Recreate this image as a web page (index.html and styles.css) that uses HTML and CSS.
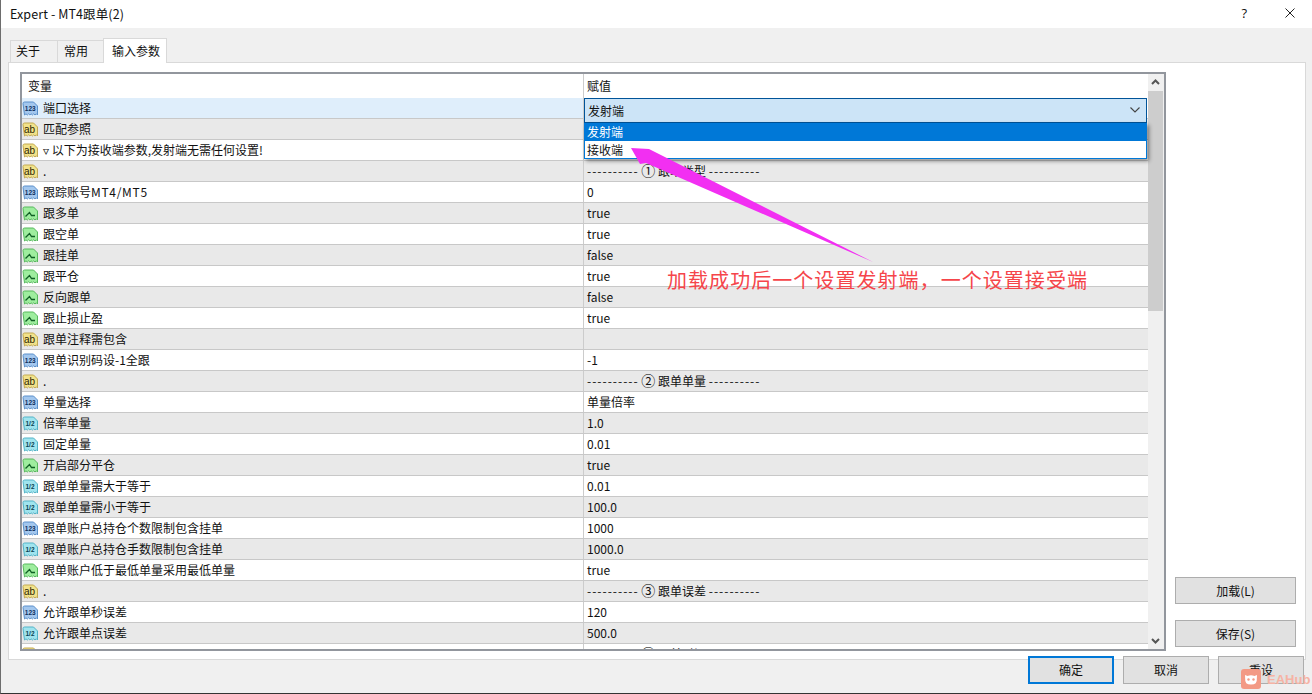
FILE: index.html
```html
<!DOCTYPE html>
<html lang="zh-CN">
<head>
<meta charset="utf-8">
<title>Expert - MT4跟单(2)</title>
<link rel="stylesheet" href="styles.css">
</head>
<body>
<svg class="defs" width="0" height="0" aria-hidden="true">
  <defs>
    <path id="doc" d="M1 2.5 Q1 1 2.5 1 H11.5 L15.5 5 V14 l-1.2 -1.2 -1.3 1.2 -1.3 -1.2 -1.3 1.2 -1.3 -1.2 -1.2 1.2 -1.3 -1.2 -1.3 1.2 -1.3 -1.2 -1.5 1.2 Z"/>
    <symbol id="i-int" viewBox="0 0 17 15"><use href="#doc" fill="#a3c7ee" stroke="#5a8fca"/><text x="8.2" y="10.4" class="t-int">123</text></symbol>
    <symbol id="i-str" viewBox="0 0 17 15"><use href="#doc" fill="#f2e28a" stroke="#c2a951"/><text x="7.6" y="10.6" class="t-str">ab</text></symbol>
    <symbol id="i-bool" viewBox="0 0 17 15"><use href="#doc" fill="#9eed9e" stroke="#56b85c"/><path d="M3.5 10.5 L7.5 6.5 L9.5 9.5 H13" fill="none" stroke="#0f5f24" stroke-width="1.3"/></symbol>
    <symbol id="i-dbl" viewBox="0 0 17 15"><use href="#doc" fill="#a0e4ee" stroke="#52b3c7"/><text x="8" y="10.4" class="t-dbl">1/2</text></symbol>
  </defs>
</svg>

<div class="window">
  <header class="titlebar">
    <span class="title">Expert - MT4跟单(2)</span>
    <span class="help">?</span>
    <svg class="close" width="10" height="10" viewBox="0 0 10 10"><path d="M0.5 0.5 L9.5 9.5 M9.5 0.5 L0.5 9.5" stroke="#222" fill="none"/></svg>
  </header>

  <nav class="tabs">
    <span class="tab">关于</span>
    <span class="tab tab-b">常用</span>
    <span class="tab tab-active">输入参数</span>
  </nav>

  <section class="panel">
    <div class="list">
      <div class="list-main">
        <div class="row head"><div class="c1 head-c1">变量</div><div class="c2">赋值</div></div>
        <div class="rows">
          <div class="row sel"><div class="c1"><svg class="ic"><use href="#i-int"/></svg>端口选择</div><div class="c2"></div></div>
          <div class="row"><div class="c1"><svg class="ic"><use href="#i-str"/></svg>匹配参照</div><div class="c2"></div></div>
          <div class="row"><div class="c1"><svg class="ic"><use href="#i-str"/></svg>▿ 以下为接收端参数,发射端无需任何设置!</div><div class="c2"></div></div>
          <div class="row"><div class="c1"><svg class="ic"><use href="#i-str"/></svg>.</div><div class="c2"><span><span class="dash">----------</span> <span class="num">①</span> 跟单类型 <span class="dash">----------</span></span></div></div>
          <div class="row"><div class="c1"><svg class="ic"><use href="#i-int"/></svg><span>跟踪账号<span class="latin">MT4/MT5</span></span></div><div class="c2">0</div></div>
          <div class="row"><div class="c1"><svg class="ic"><use href="#i-bool"/></svg>跟多单</div><div class="c2">true</div></div>
          <div class="row"><div class="c1"><svg class="ic"><use href="#i-bool"/></svg>跟空单</div><div class="c2">true</div></div>
          <div class="row"><div class="c1"><svg class="ic"><use href="#i-bool"/></svg>跟挂单</div><div class="c2">false</div></div>
          <div class="row"><div class="c1"><svg class="ic"><use href="#i-bool"/></svg>跟平仓</div><div class="c2">true</div></div>
          <div class="row"><div class="c1"><svg class="ic"><use href="#i-bool"/></svg>反向跟单</div><div class="c2">false</div></div>
          <div class="row"><div class="c1"><svg class="ic"><use href="#i-bool"/></svg>跟止损止盈</div><div class="c2">true</div></div>
          <div class="row"><div class="c1"><svg class="ic"><use href="#i-str"/></svg>跟单注释需包含</div><div class="c2"></div></div>
          <div class="row"><div class="c1"><svg class="ic"><use href="#i-int"/></svg>跟单识别码设-1全跟</div><div class="c2">-1</div></div>
          <div class="row"><div class="c1"><svg class="ic"><use href="#i-str"/></svg>.</div><div class="c2"><span><span class="dash">----------</span> <span class="num">②</span> 跟单单量 <span class="dash">----------</span></span></div></div>
          <div class="row"><div class="c1"><svg class="ic"><use href="#i-int"/></svg>单量选择</div><div class="c2">单量倍率</div></div>
          <div class="row"><div class="c1"><svg class="ic"><use href="#i-dbl"/></svg>倍率单量</div><div class="c2">1.0</div></div>
          <div class="row"><div class="c1"><svg class="ic"><use href="#i-dbl"/></svg>固定单量</div><div class="c2">0.01</div></div>
          <div class="row"><div class="c1"><svg class="ic"><use href="#i-bool"/></svg>开启部分平仓</div><div class="c2">true</div></div>
          <div class="row"><div class="c1"><svg class="ic"><use href="#i-dbl"/></svg>跟单单量需大于等于</div><div class="c2">0.01</div></div>
          <div class="row"><div class="c1"><svg class="ic"><use href="#i-dbl"/></svg>跟单单量需小于等于</div><div class="c2">100.0</div></div>
          <div class="row"><div class="c1"><svg class="ic"><use href="#i-int"/></svg>跟单账户总持仓个数限制包含挂单</div><div class="c2">1000</div></div>
          <div class="row"><div class="c1"><svg class="ic"><use href="#i-dbl"/></svg>跟单账户总持仓手数限制包含挂单</div><div class="c2">1000.0</div></div>
          <div class="row"><div class="c1"><svg class="ic"><use href="#i-bool"/></svg>跟单账户低于最低单量采用最低单量</div><div class="c2">true</div></div>
          <div class="row"><div class="c1"><svg class="ic"><use href="#i-str"/></svg>.</div><div class="c2"><span><span class="dash">----------</span> <span class="num">③</span> 跟单误差 <span class="dash">----------</span></span></div></div>
          <div class="row"><div class="c1"><svg class="ic"><use href="#i-int"/></svg>允许跟单秒误差</div><div class="c2">120</div></div>
          <div class="row"><div class="c1"><svg class="ic"><use href="#i-dbl"/></svg>允许跟单点误差</div><div class="c2">500.0</div></div>
          <div class="row"><div class="c1"><svg class="ic"><use href="#i-str"/></svg>.</div><div class="c2"><span><span class="dash">----------</span> <span class="num">④</span> 跟单时间 <span class="dash">----------</span></span></div></div>

          <div class="combo">
            <span>发射端</span>
            <svg width="10" height="6" viewBox="0 0 10 6"><path d="M0.5 0.5 L5 5 L9.5 0.5" fill="none" stroke="#444" stroke-width="1.1"/></svg>
          </div>
          <div class="popup">
            <div class="opt opt-on">发射端</div>
            <div class="opt">接收端</div>
          </div>
        </div>
      </div>
      <div class="scrollbar">
        <svg class="sb-btn" width="15" height="17" viewBox="0 0 15 17"><path d="M4 10 L7.5 6.5 L11 10" fill="none" stroke="#555" stroke-width="2"/></svg>
        <div class="thumb"></div>
        <div class="sb-track"></div>
        <svg class="sb-btn" width="15" height="17" viewBox="0 0 15 17"><path d="M4 7 L7.5 10.5 L11 7" fill="none" stroke="#555" stroke-width="2"/></svg>
      </div>
    </div>
    <aside class="side">
      <button class="btn btn-side">加载(L)</button>
      <button class="btn btn-side">保存(S)</button>
    </aside>
  </section>

  <footer class="footer">
    <button class="btn btn-foot btn-default">确定</button>
    <button class="btn btn-foot">取消</button>
    <button class="btn btn-foot">重设</button>
  </footer>

  <svg class="arrow" width="260" height="125" viewBox="625 143 260 125"><polygon points="631,148 649,149 873,262 646,163 640,164" fill="#f22ff2"/></svg>
  <div class="note">加载成功后一个设置发射端，一个设置接受端</div>
  <div class="watermark">
    <svg width="20" height="20" viewBox="0 0 20 20"><rect width="20" height="20" rx="3" fill="#f39a85"/><path d="M4 6 L6.5 7 Q10 5.5 13.5 7 L16 6 L15.8 10 Q16.5 15.5 10 15.5 Q3.5 15.5 4.2 10 Z" fill="#fff"/><circle cx="7.5" cy="10.5" r="1.2" fill="#f39a85"/><circle cx="12.5" cy="10.5" r="1.2" fill="#f39a85"/></svg>
    <span>EAHub</span>
  </div>
</div>
</body>
</html>
```

FILE: styles.css
```css
* { box-sizing: border-box; }
html, body { margin: 0; padding: 0; }
body { width: 1312px; height: 694px; overflow: hidden; background: #f0f0f0; font-family: "Noto Sans CJK SC", "Noto Sans", sans-serif; font-size: 12px; color: #111; }
.defs { position: absolute; }
.window { position: relative; width: 1312px; height: 694px; display: flex; flex-direction: column; background: #f0f0f0; border-left: 1px solid #6d6d6d; border-bottom: 1px solid #333; }

.titlebar { height: 28px; flex: none; background: #fff; display: flex; align-items: center; padding: 0 0 2px 9px; }
.title { flex: 1; font-size: 12.5px; letter-spacing: 0.1px; }
.help { font-size: 13px; margin-right: 38px; font-family: "Open Sans", sans-serif; }
.close { margin-right: 17px; }

.tabs { height: 34px; flex: none; display: flex; align-items: flex-end; padding-left: 9px; position: relative; z-index: 1; }
.tab { height: 22px; width: 48px; display: flex; align-items: center; padding: 0 0 2px 5px; background: #f0f0f0; border: 1px solid #d9d9d9; border-bottom: 0; }
.tab-b { width: 47px; margin-left: -1px; padding-left: 6px; }
.tab-active { width: 64px; height: 25px; margin-left: -1px; margin-bottom: -1px; background: #fff; padding-left: 8px; }

.panel { width: 1298px; height: 598px; flex: none; margin-left: 7px; background: #fff; border: 1px solid #d9d9d9; display: flex; padding: 9px 9px 8px 11px; }

.list { width: 1146px; height: 579px; flex: none; display: flex; border: 2px solid #92969d; background: #fff; overflow: hidden; }
.list-main { width: 1126px; flex: none; }
.rows { position: relative; }
.row { display: flex; height: 21px; border-bottom: 1px solid #c8c8c8; background: #fff; }
.rows .row:nth-child(even) { background: #e9e9e9; }
.head { height: 24px; border-bottom: 0; align-items: center; }
.c1 { width: 561px; flex: none; display: flex; align-items: center; white-space: nowrap; height: 100%; padding-bottom: 2px; }
.c2 { flex: 1; display: flex; align-items: center; white-space: pre; padding: 0 0 2px 3px; height: 100%; border-left: 1px solid #ccc; }
.head-c1 { padding-left: 6px; }
.sel .c1 { background: #dfeefb; }
.ic { width: 17px; height: 15px; flex: none; margin: 3px 4px 0 0; }
.latin { letter-spacing: 0.7px; }
.dash { letter-spacing: 1px; }
.num { font-size: 14px; line-height: 1; }
.t-int, .t-dbl, .t-str { font-family: "Liberation Sans", sans-serif; text-anchor: middle; }
.t-int { font-size: 6.5px; font-weight: 700; fill: #0e2f5c; }
.t-str { font-size: 10px; fill: #2e2600; }
.t-dbl { font-size: 6.5px; font-weight: 700; fill: #0a4252; }

.combo { position: absolute; left: 562px; top: 0; width: 563px; height: 25px; background: #cce4f7; border: 1px solid #005499; display: flex; align-items: center; justify-content: space-between; padding: 0 6px 1px 3px; }
.popup { position: absolute; left: 562px; top: 25px; width: 563px; height: 36px; background: #fff; border: 1px solid #0078d7; border-top: 0; box-shadow: 2px 2px 4px rgba(0,0,0,.45); }
.opt { height: 18px; line-height: 18px; padding-left: 2px; }
.opt-on { background: #0078d7; color: #fff; }

.scrollbar { width: 16px; flex: none; display: flex; flex-direction: column; background: #f0f0f0; }
.sb-btn { flex: none; }
.thumb { height: 220px; flex: none; background: #cdcdcd; margin-right: 1px; }
.sb-track { flex: 1; }

.side { flex: 1; display: flex; flex-direction: column; align-items: flex-end; justify-content: flex-end; gap: 16px; padding-bottom: 4px; }
.btn { font: inherit; color: #111; background: #e1e1e1; border: 1px solid #adadad; padding: 0 0 1px; }
.btn-side { width: 121px; height: 27px; }

.footer { flex: 1; display: flex; justify-content: flex-end; align-items: flex-start; gap: 9px; padding: 0 8px 0 0; margin-top: -4px; }
.btn-foot { width: 86px; height: 28px; position: relative; }
.btn-default { border: 2px solid #0078d7; }

.arrow { position: absolute; left: 624px; top: 143px; }
.note { position: absolute; left: 666px; top: 265px; font-size: 20px; line-height: 30px; color: #f5454a; letter-spacing: 1.05px; white-space: nowrap; }
.watermark { position: absolute; left: 1240px; top: 669px; display: flex; align-items: center; gap: 6px; }
.watermark span { font-family: "Liberation Sans", sans-serif; font-weight: 700; font-size: 13px; color: #f6b3a4; }
```
